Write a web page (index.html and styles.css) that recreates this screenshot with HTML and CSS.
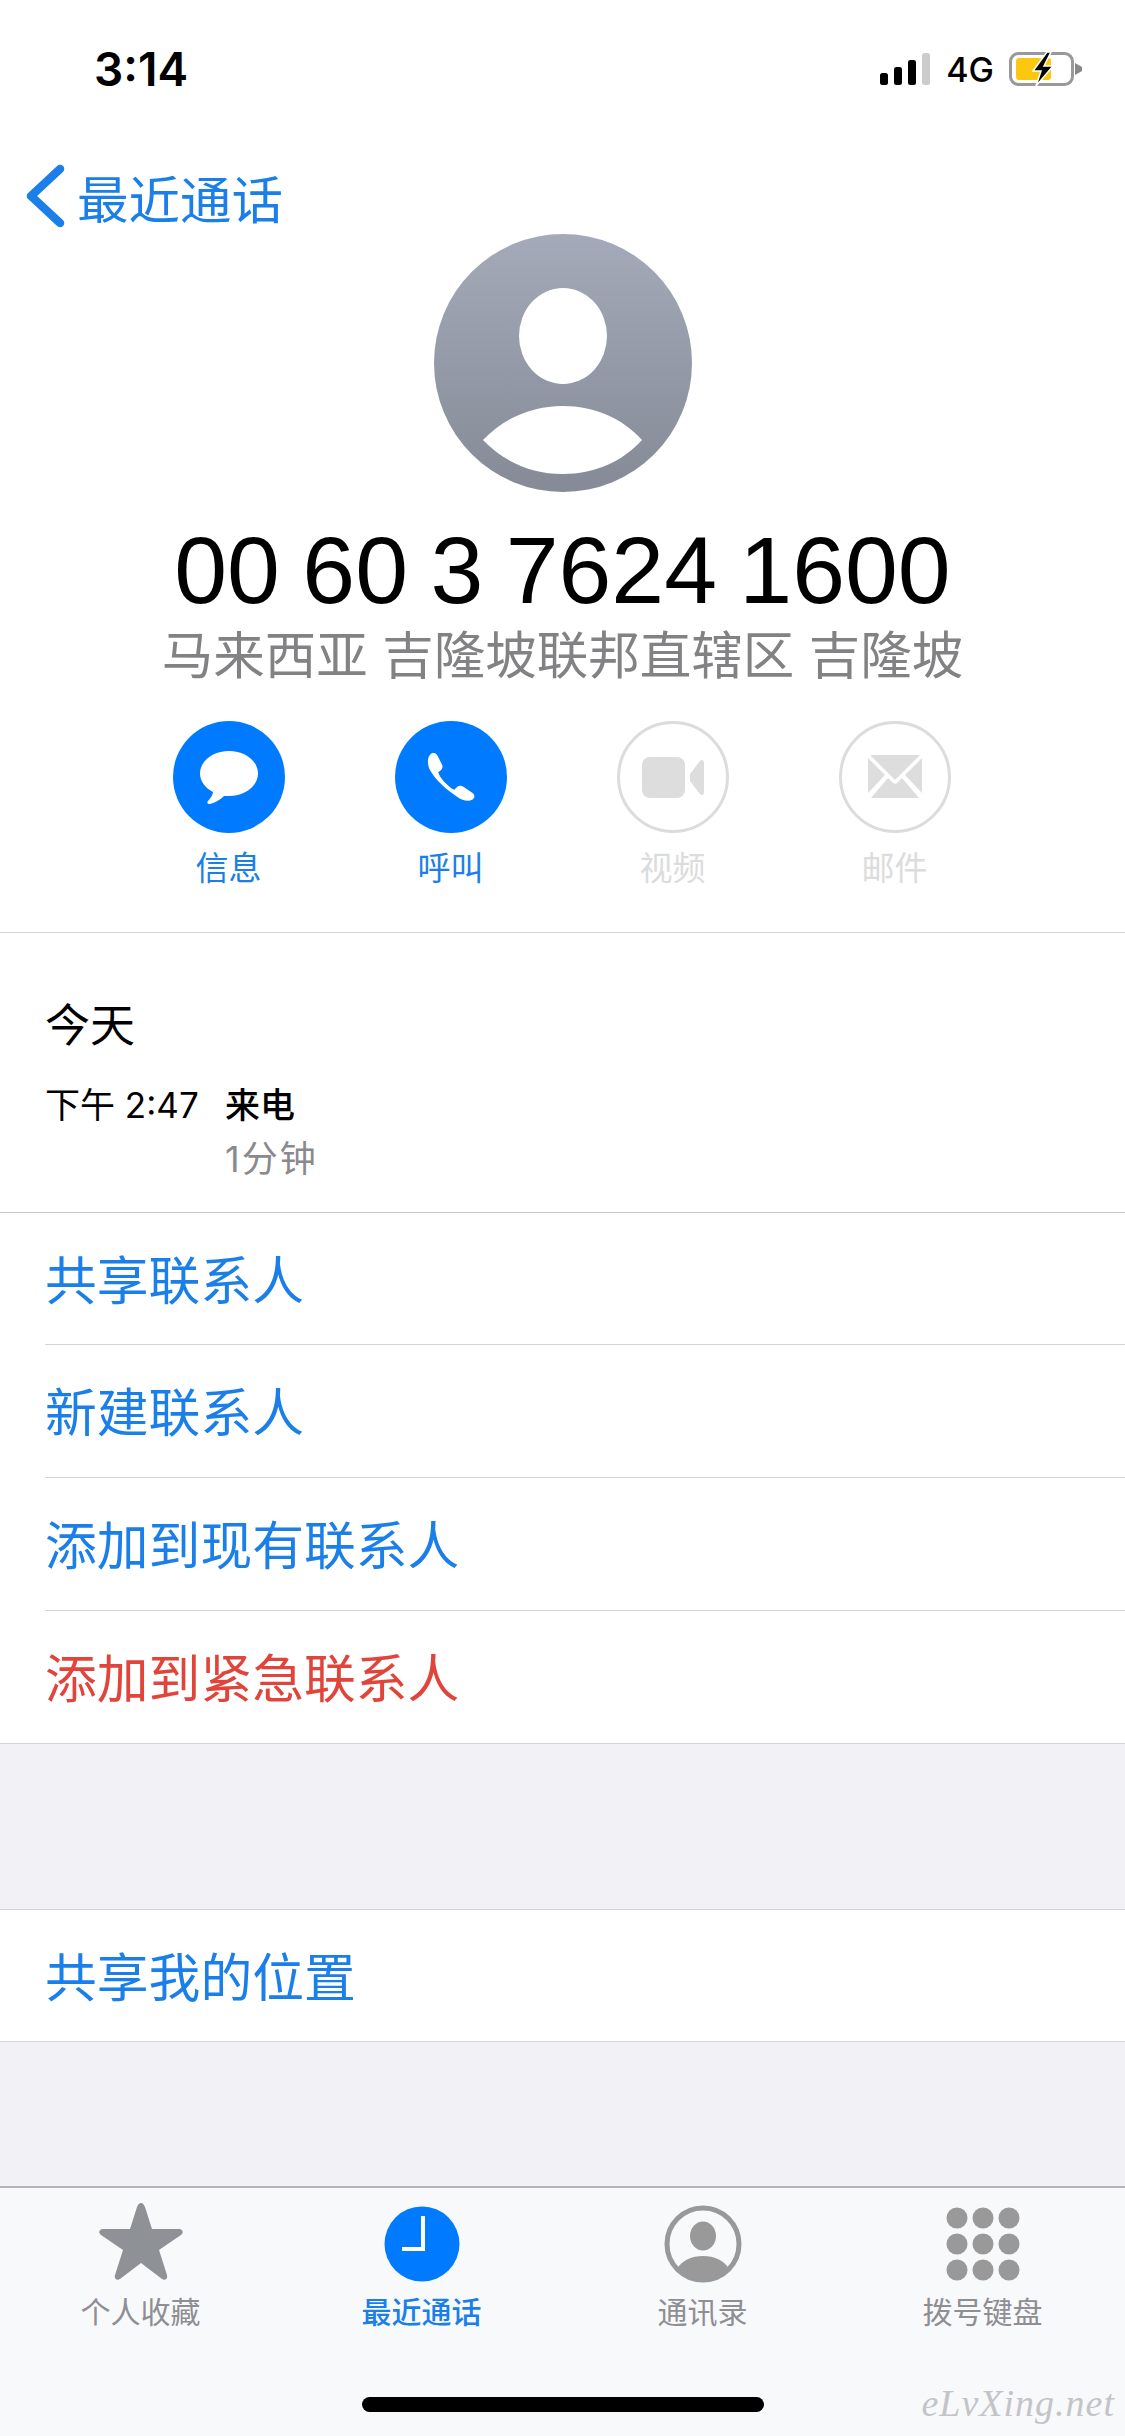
FILE: index.html

```html
<!DOCTYPE html>
<html>
	<head>
		<meta charset="utf-8">
		<title>最近通话</title>
		<link rel="stylesheet" href="styles.css">
	</head>
	<body>
		<div id="phone">
			<div id="status">
				<span id="time">3:14</span>
				<div id="status_right">
					<svg width="51" height="32" viewBox="0 0 51 32">
						<rect x="0" y="20" width="8" height="12" rx="2.5" fill="#000"/>
						<rect x="14" y="14" width="8" height="18" rx="2.5" fill="#000"/>
						<rect x="28" y="7" width="8" height="25" rx="2.5" fill="#000"/>
						<rect x="42" y="0" width="8" height="32" rx="2.5" fill="#ccc"/>
					</svg>
					<span id="net">4G</span>
					<svg width="74" height="34" viewBox="0 0 74 34">
						<rect x="1.5" y="1.5" width="62" height="31" rx="8" fill="#fff" stroke="#999" stroke-width="3"/>
						<rect x="7" y="6" width="35" height="22" rx="3" fill="#fbc70f"/>
						<path d="M66 11 L73 15 L73 19 L66 23 Z" fill="#888"/>
						<path d="M38 0 L24 19 L32 19 L27 34 L44 14 L35 14 L42 0 Z" fill="#000" stroke="#fff" stroke-width="1.5"/>
					</svg>
				</div>
			</div>
			<div id="nav">
				<svg width="42" height="64" viewBox="0 0 42 64">
					<path d="M36 5 L7 32 L36 59" fill="none" stroke="#1a7fe8" stroke-width="8.5" stroke-linecap="round" stroke-linejoin="round"/>
				</svg>
				<span>最近通话</span>
			</div>
			<div id="contact">
				<svg width="258" height="258" viewBox="0 0 258 258">
					<defs>
						<linearGradient id="grad" x1="0" y1="0" x2="0" y2="1">
							<stop offset="0" stop-color="#a5aaba"/>
							<stop offset="1" stop-color="#858a96"/>
						</linearGradient>
					</defs>
					<circle cx="129" cy="129" r="129" fill="url(#grad)"/>
					<ellipse cx="129" cy="102" rx="44" ry="48" fill="#fff"/>
					<path d="M49 206 C70 184 98 172 129 172 C160 172 188 184 208 206 C188 228 160 240 129 240 C98 240 70 228 49 206 Z" fill="#fff"/>
				</svg>
				<h1>00 60 3 7624 1600</h1>
				<p>马来西亚 吉隆坡联邦直辖区 吉隆坡</p>
			</div>
			<ul id="actions">
				<li>
					<div class="circle">
						<svg width="58" height="53" viewBox="0 0 58 53">
							<path d="M29 0 C45 0 58 10 58 22.5 C58 35 45 45 29 45 C27 45 26 45 24 45 C20 49 13 53 9 53 C7 53 7 51 8 50 C11 47 13 43 13 41 C5 37 0 30 0 22.5 C0 10 13 0 29 0 Z" fill="#fff"/>
						</svg>
					</div>
					<span>信息</span>
				</li>
				<li>
					<div class="circle">
						<svg width="48" height="48" viewBox="0 0 60 60">
							<path d="M5 1 C8 -1 11 0 13 3 L19 15 C20 18 19 20 17 22 L14 24 C16 31 26 42 34 46 L37 43 C39 41 42 40 45 42 L57 50 C60 52 60 56 57 58 C52 61 45 60 38 55 C24 46 11 34 4 22 C0 14 0 5 5 1 Z" fill="#fff"/>
						</svg>
					</div>
					<span>呼叫</span>
				</li>
				<li class="off">
					<div class="circle">
						<svg width="62" height="41" viewBox="0 0 62 41">
							<rect x="0" y="0" width="43" height="41" rx="8" fill="#ddd"/>
							<path d="M48 17 L58 4 C60 2 62 3 62 6 L62 35 C62 38 60 39 58 37 L48 24 Z" fill="#ddd"/>
						</svg>
					</div>
					<span>视频</span>
				</li>
				<li class="off">
					<div class="circle">
						<svg width="54" height="44" viewBox="0 0 54 44">
							<path d="M2 0 L52 0 L28 24 C27 25 27 25 26 24 Z" fill="#ddd"/>
							<path d="M0 3 L17 20 L0 38 Z M54 3 L37 20 L54 38 Z" fill="#ddd"/>
							<path d="M3 43 L20 23 L25 28 C26 29 28 29 29 28 L34 23 L51 43 Z" fill="#ddd"/>
						</svg>
					</div>
					<span>邮件</span>
				</li>
			</ul>
			<div id="detail">
				<h5>今天</h5>
				<div id="call">
					<span id="call_time">下午 2:47</span>
					<div>
						<p id="call_type">来电</p>
						<p id="call_len">1分钟</p>
					</div>
				</div>
			</div>
			<ul class="list first">
				<li>共享联系人</li>
				<li>新建联系人</li>
				<li>添加到现有联系人</li>
				<li class="red">添加到紧急联系人</li>
			</ul>
			<ul class="list second">
				<li>共享我的位置</li>
			</ul>
			<div id="tabbar">
				<ul>
					<li>
						<svg width="84" height="84" viewBox="0 0 84 84">
							<path d="M42 1 C44 1 45 3 46 5 L53 27 L80 27 C84 27 85 31 82 33 L60 48 L68 73 C69 77 66 79 63 77 L42 61 L21 77 C18 79 15 77 16 73 L24 48 L2 33 C-1 31 0 27 4 27 L31 27 L38 5 C39 3 40 1 42 1 Z" fill="#8e9297"/>
						</svg>
						<span>个人收藏</span>
					</li>
					<li class="on">
						<svg width="76" height="84" viewBox="0 -4 76 84">
							<circle cx="38" cy="38" r="37.5" fill="#007aff"/>
							<path d="M39 10 L39 43 L18 43" fill="none" stroke="#fff" stroke-width="4"/>
						</svg>
						<span>最近通话</span>
					</li>
					<li>
						<svg width="78" height="84" viewBox="0 -3 78 84">
							<circle cx="39" cy="39" r="36" fill="none" stroke="#999" stroke-width="5"/>
							<ellipse cx="39" cy="31" rx="13" ry="14.5" fill="#999"/>
							<path d="M13 64 C18 55 28 51 39 51 C50 51 60 55 65 64 C58 72 49 75 39 75 C29 75 20 72 13 64 Z" fill="#999"/>
						</svg>
						<span>通讯录</span>
					</li>
					<li>
						<svg width="74" height="84" viewBox="0 -5 74 84">
							<circle cx="11" cy="11" r="10.5" fill="#999"/>
							<circle cx="37" cy="11" r="10.5" fill="#999"/>
							<circle cx="63" cy="11" r="10.5" fill="#999"/>
							<circle cx="11" cy="37" r="10.5" fill="#999"/>
							<circle cx="37" cy="37" r="10.5" fill="#999"/>
							<circle cx="63" cy="37" r="10.5" fill="#999"/>
							<circle cx="11" cy="63" r="10.5" fill="#999"/>
							<circle cx="37" cy="63" r="10.5" fill="#999"/>
							<circle cx="63" cy="63" r="10.5" fill="#999"/>
						</svg>
						<span>拨号键盘</span>
					</li>
				</ul>
				<div id="home"></div>
				<span id="mark">eLvXing.net</span>
			</div>
		</div>
	</body>
</html>
```

FILE: styles.css

```css
*{
	margin: 0px;
	padding: 0px;
	box-sizing: border-box;
}
ul{
	list-style: none;
}
body{
	background: #fff;
	font-family: "Inter", "Noto Sans CJK SC", sans-serif;
}
#phone{
	width: 1125px;
	height: 2436px;
	display: flex;
	flex-direction: column;
	overflow: hidden;
	background: #f1f1f6;
}
#status{
	height: 138px;
	padding: 46px 42px 0 94px;
	display: flex;
	justify-content: space-between;
	align-items: flex-start;
	background: #fff;
}
#time{
	font-size: 46px;
	line-height: 46px;
	font-weight: 600;
	color: #000;
}
#status_right{
	display: flex;
	align-items: center;
	gap: 15px;
	height: 46px;
}
#net{
	font-size: 34px;
	font-weight: 500;
	color: #000;
}
#nav{
	height: 96px;
	padding: 20px 0 0 24px;
	display: flex;
	align-items: center;
	gap: 11px;
	background: #fff;
	color: #1a7fe8;
	font-size: 51.5px;
}
#contact{
	display: flex;
	flex-direction: column;
	align-items: center;
	background: #fff;
}
#contact h1{
	margin-top: 28px;
	font-family: "Liberation Sans", sans-serif;
	font-size: 95px;
	line-height: 100px;
	font-weight: 400;
	word-spacing: -4px;
	color: #000;
}
#contact p{
	margin-top: 1px;
	font-size: 51.5px;
	line-height: 68px;
	color: #828284;
}
#actions{
	height: 244px;
	padding: 32px 2px 0 0;
	display: flex;
	justify-content: center;
	gap: 110px;
	background: #fff;
	border-bottom: 1px solid #d4d4d6;
}
#actions li{
	width: 112px;
	display: flex;
	flex-direction: column;
	align-items: center;
	gap: 13px;
	font-size: 33px;
	line-height: 44px;
	color: #1a7fe8;
}
.circle{
	width: 112px;
	height: 112px;
	border-radius: 50%;
	background: #007aff;
	display: flex;
	align-items: center;
	justify-content: center;
}
#actions .off{
	color: #dcdcdc;
}
.off .circle{
	background: #fff;
	border: 3px solid #dcdcdc;
}
#detail{
	height: 280px;
	padding: 63px 0 0 45px;
	background: #fff;
	border-bottom: 1px solid #c8c8cc;
}
#detail h5{
	font-size: 45px;
	line-height: 60px;
	font-weight: 400;
	color: #000;
}
#call{
	margin-top: 22px;
	display: flex;
	font-size: 35px;
	line-height: 54px;
	color: #000;
}
#call_time{
	width: 180px;
}
#call_type{
	font-weight: 500;
}
#call_len{
	font-size: 36px;
	letter-spacing: 2px;
	color: #8a8a8e;
}
.list{
	background: #fff;
	border-bottom: 1px solid #d4d4d6;
}
.list li{
	height: 133px;
	margin-left: 45px;
	padding-bottom: 3px;
	display: flex;
	align-items: center;
	border-bottom: 1px solid #d4d4d6;
	font-size: 51.8px;
	color: #1a7fe8;
}
.list li:first-child,
.list li:last-child{
	height: 132px;
}
.list li:last-child{
	border-bottom: none;
}
.list .red{
	color: #e0443a;
}
.second{
	margin-top: 165px;
	border-top: 1px solid #d4d4d6;
}
.second li:last-child{
	height: 131px;
}
#tabbar{
	position: relative;
	margin-top: auto;
	height: 250px;
	background: #f8f9fb;
	border-top: 2px solid #b4b4b8;
}
#tabbar ul{
	display: flex;
	padding-top: 14px;
}
#tabbar li{
	width: 281px;
	display: flex;
	flex-direction: column;
	align-items: center;
	font-size: 30px;
	color: #8e8e93;
}
#tabbar li:last-child{
	width: 279px;
}
#tabbar li span{
	margin-top: 6px;
	line-height: 40px;
}
#tabbar .on{
	color: #1a7fe8;
	font-weight: 500;
}
#home{
	position: absolute;
	left: 362px;
	top: 209px;
	width: 402px;
	height: 15px;
	border-radius: 8px;
	background: #000;
}
#mark{
	position: absolute;
	right: 10px;
	top: 195px;
	font-family: "Liberation Serif", serif;
	font-style: italic;
	font-size: 38px;
	line-height: 40px;
	letter-spacing: 1px;
	color: #c4c4c8;
}
```
